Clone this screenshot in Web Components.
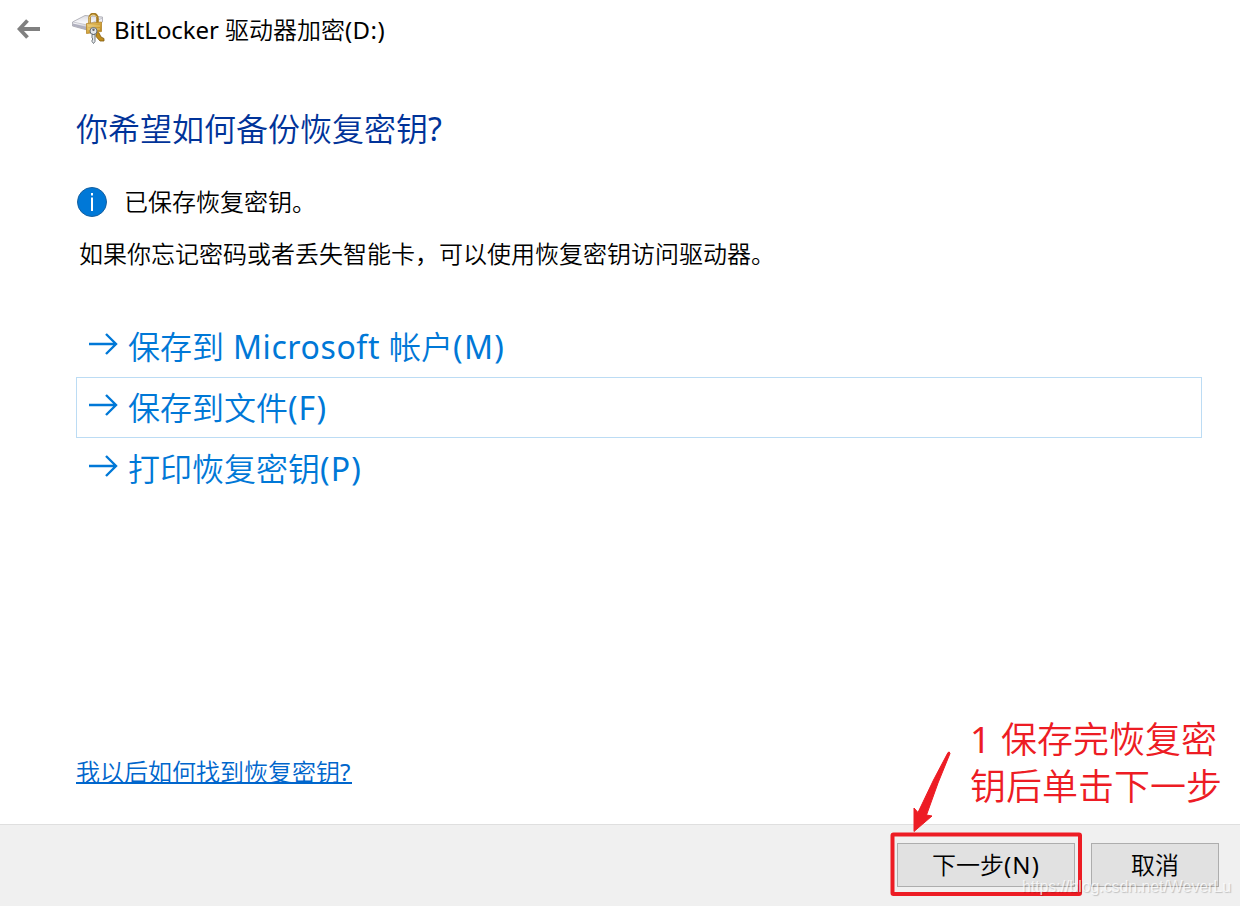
<!DOCTYPE html>
<html lang="zh-CN">
<head>
<meta charset="utf-8">
<title>BitLocker 驱动器加密(D:)</title>
<style>
    body{
        margin: 0;
        background-color: #fff;
        font-family: "Noto Sans", "Noto Sans CJK SC", sans-serif;
        font-weight: 350;
    }
</style>
</head>
<body>
<bl-wizard>
    <wizard-title slot="title"><div><fit-text data-width="105">BitLocker</fit-text><fit-text data-width="6"> </fit-text>驱动器加密<fit-text data-width="40">(D:)</fit-text></div></wizard-title>
    <wizard-heading slot="content">你希望如何备份恢复密钥<fit-text data-width="14">?</fit-text></wizard-heading>
    <info-note slot="content">已保存恢复密钥。</info-note>
    <wizard-text slot="content">如果你忘记密码或者丢失智能卡，可以使用恢复密钥访问驱动器。</wizard-text>
    <command-list slot="content">
        <command-link>保存到<fit-text data-width="165"> Microsoft </fit-text>帐户<fit-text data-width="52">(M)</fit-text></command-link>
        <command-link class="focused">保存到文件<fit-text data-width="39">(F)</fit-text></command-link>
        <command-link>打印恢复密钥<fit-text data-width="42">(P)</fit-text></command-link>
    </command-list>
    <help-link slot="help">我以后如何找到恢复密钥<fit-text data-width="12">?</fit-text></help-link>
    <wizard-button slot="buttons" data-width="178">下一步<fit-text data-width="36">(N)</fit-text></wizard-button>
    <wizard-button slot="buttons" data-width="128">取消</wizard-button>
</bl-wizard>
<click-hint><div><fit-text data-width="31">1 </fit-text>保存完恢复密</div><div>钥后单击下一步</div></click-hint>
<water-mark><fit-text data-width="209">https://blog.csdn.net/WeverLu</fit-text></water-mark>

<script>
function addTemplate(element, html){
    const template = document.createElement("template");
    template.innerHTML = html;
    element.attachShadow({mode: "open"});
    element.shadowRoot.appendChild(template.content.cloneNode(true));
}

// latin text run that spreads its letters over a given width
class FitText extends HTMLElement{
    constructor(){
        super();
        addTemplate(this, `<style>
    :host{
        display: inline-block;
        font-weight: 400;
        white-space: pre;
    }
</style><slot></slot>`);
    }
    connectedCallback(){
        const width = Number(this.getAttribute("data-width"));
        requestAnimationFrame(() => {
            const extra = width - this.getBoundingClientRect().width;
            this.style.letterSpacing = extra / this.textContent.length + "px";
        });
    }
}
customElements.define("fit-text", FitText);

class WizardTitle extends HTMLElement{
    constructor(){
        super();
        addTemplate(this, `
<style>
    :host{
        display: flex;
        align-items: center;
        height: 60px;
        font-size: 24px;
        line-height: 60px;
        color: #000;
    }
    .back{
        width: 24px;
        height: 20px;
        margin: 0 0 2px 17px;
    }
    .drive{
        width: 34px;
        height: 34px;
        margin: 0 8px 0 31px;
    }
</style>
<svg class="back" viewBox="0 0 24 20"><path d="M23 10H3M10.500 1.500 2.500 10l8 8.500" fill="none" stroke="#808080" stroke-width="3.800"/></svg>
<svg class="drive" viewBox="0 0 34 34">
    <defs>
        <linearGradient id="metal" x1="0" y1="0" x2="0" y2="1"><stop offset="0" stop-color="#dcdce2"/><stop offset=".5" stop-color="#fafafd"/><stop offset="1" stop-color="#9c9ca8"/></linearGradient>
        <linearGradient id="gold" x1="0" y1="0" x2="1" y2="1"><stop offset="0" stop-color="#f0d486"/><stop offset=".5" stop-color="#d4a73f"/><stop offset="1" stop-color="#b37f18"/></linearGradient>
    </defs>
    <path d="M.5 9 13 2.500 30.500 4v5L17 17.500.5 13z" fill="url(#metal)" stroke="#a5a5ad" stroke-width=".8"/>
    <path d="M1 9 15 12 30.500 5" fill="none" stroke="#bcbcc4" stroke-width=".8"/>
    <path d="M1 10.500 15 14v2.500L1 12.700z" fill="#b0b0bf"/>
    <path d="M17.500 11V5.500a4 4.500 0 0 1 8 0V11" fill="none" stroke="#a67a20" stroke-width="2.600"/>
    <path d="M17.200 11V5.700a4 4.300 0 0 1 7.500-1.500" fill="none" stroke="#eed58e" stroke-width="1"/>
    <path d="M24 18 27 20l2 4 3 1.500v2.500h-4L24 23.500z" fill="#bf8c1d" stroke="#815b10" stroke-width=".8"/>
    <path d="M14.500 10.500 29.500 9v9.500l-15 2z" fill="url(#gold)" stroke="#b48429" stroke-width=".8"/>
    <path d="M16 13h12M16 16h12" stroke="#f2dc9c" stroke-width=".7"/>
    <circle cx="21.500" cy="18" r="3.500" fill="#e3e6e9" stroke="#666e77"/>
    <circle cx="21.500" cy="16.800" r="1.200" fill="#65666b"/>
    <path d="M20 21.500h3v7l-1.500 2-1.500-2v-1.500l1-1-1-1z" fill="#e4e7ea" stroke="#646b72" stroke-width=".9"/>
</svg>
<slot></slot>`);
    }
}
customElements.define("wizard-title", WizardTitle);

class WizardHeading extends HTMLElement{
    constructor(){
        super();
        addTemplate(this, `
<style>
    :host{
        display: block;
        margin-top: 45px;
        height: 48px;
        font-size: 32px;
        line-height: 48px;
        color: #003399;
    }
</style>
<slot></slot>`);
    }
}
customElements.define("wizard-heading", WizardHeading);

class InfoNote extends HTMLElement{
    constructor(){
        super();
        addTemplate(this, `
<style>
    :host{
        display: flex;
        align-items: center;
        gap: 17px;
        margin: 29px 0 0 1px;
        height: 40px;
        font-size: 24px;
        line-height: 40px;
        color: #000;
    }
</style>
<svg width="30" height="30" viewBox="0 0 30 30">
    <circle cx="15" cy="15" r="14.500" fill="#0078d7" stroke="#17609f"/>
    <path d="M14 6h2v2.500h-2zM14 10.500h2V24h-2z" fill="#fff"/>
</svg>
<slot></slot>`);
    }
}
customElements.define("info-note", InfoNote);

class WizardText extends HTMLElement{
    constructor(){
        super();
        addTemplate(this, `
<style>
    :host{
        display: block;
        margin: 12px 0 0 3px;
        height: 40px;
        font-size: 24px;
        line-height: 40px;
        color: #000;
    }
</style>
<slot></slot>`);
    }
}
customElements.define("wizard-text", WizardText);

class CommandList extends HTMLElement{
    constructor(){
        super();
        addTemplate(this, `
<style>
    :host{
        display: flex;
        flex-direction: column;
        margin-top: 42px;
    }
</style>
<slot></slot>`);
    }
}
customElements.define("command-list", CommandList);

class CommandLink extends HTMLElement{
    constructor(){
        super();
        addTemplate(this, `
<style>
    :host{
        display: flex;
        box-sizing: border-box;
        width: 1126px;
        height: 61px;
        padding-left: 12px;
        border: 1px solid transparent;
        font-size: 32px;
        line-height: 59px;
        color: #0078d7;
    }
    :host(.focused){
        border-color: #bcdcf4;
    }
    svg{
        margin: 16px 10px 0 0;
    }
</style>
<svg width="29" height="22" viewBox="0 0 29 22"><path d="M0 11h27M17 1l10 10-10 10" fill="none" stroke="#0078d7" stroke-width="2.400"/></svg>
<div><slot></slot></div>`);
    }
}
customElements.define("command-link", CommandLink);

class HelpLink extends HTMLElement{
    constructor(){
        super();
        addTemplate(this, `
<style>
    :host{
        display: inline-block;
        height: 34px;
        font-size: 24px;
        line-height: 32px;
        color: #0066cc;
    }
    a{
        display: block;
        height: 26px;
        border-bottom: 2px solid #0066cc;
        cursor: pointer;
    }
</style>
<a><slot></slot></a>`);
    }
}
customElements.define("help-link", HelpLink);

class WizardButton extends HTMLElement{
    constructor(){
        super();
        addTemplate(this, `
<style>
    :host{
        display: block;
    }
    button{
        display: block;
        box-sizing: border-box;
        width: 100%;
        height: 44px;
        padding: 0;
        border: 1px solid #adadad;
        background-color: #e1e1e1;
        font: inherit;
        font-size: 24px;
        line-height: 42px;
        color: #000;
    }
</style>
<button><slot></slot></button>`);
    }
    connectedCallback(){
        this.style.width = this.getAttribute("data-width") + "px";
    }
}
customElements.define("wizard-button", WizardButton);

class BlWizard extends HTMLElement{
    constructor(){
        super();
        addTemplate(this, `
<style>
    :host{
        display: flex;
        flex-direction: column;
        height: 906px;
        overflow: hidden;
    }
    main{
        flex: 1;
        padding-left: 76px;
    }
    .help{
        padding-left: 76px;
        height: 68px;
    }
    footer{
        display: flex;
        justify-content: flex-end;
        gap: 16px;
        box-sizing: border-box;
        height: 82px;
        padding: 18px 21px 0 0;
        border-top: 1px solid #dfdfdf;
        background-color: #f0f0f0;
    }
</style>
<slot name="title"></slot>
<main><slot name="content"></slot></main>
<div class="help"><slot name="help"></slot></div>
<footer><slot name="buttons"></slot></footer>`);
    }
}
customElements.define("bl-wizard", BlWizard);

// red note, arrow and frame drawn over the dialog
class ClickHint extends HTMLElement{
    constructor(){
        super();
        addTemplate(this, `
<style>
    :host{
        position: absolute;
        left: 890px;
        top: 716px;
        width: 350px;
        height: 190px;
        font-size: 36px;
        line-height: 47px;
        color: #ed1c24;
        pointer-events: none;
    }
    svg{
        position: absolute;
        left: 0;
        top: 0;
    }
    .note{
        margin-left: 80px;
        white-space: nowrap;
    }
</style>
<svg width="350" height="190" viewBox="0 0 350 190">
    <path d="M58 36.500Q59.500 35 60 37.500L48 67 36.500 99l5.500 1L24 115.500V92L28 96.500 43.500 64z" fill="#ed1c24" stroke="#ed1c24"/>
    <rect x="2.500" y="118.500" width="187.500" height="59.500" rx="1" fill="none" stroke="#ed1c24" stroke-width="4"/>
</svg>
<div class="note"><slot></slot></div>`);
    }
}
customElements.define("click-hint", ClickHint);

class WaterMark extends HTMLElement{
    constructor(){
        super();
        addTemplate(this, `
<style>
    :host{
        position: absolute;
        left: 1022px;
        top: 876px;
        font-family: "Liberation Sans", sans-serif;
        font-size: 16px;
        line-height: 22px;
        color: rgba(255, 255, 255, .75);
        text-shadow: 1px 1px 1px rgba(0, 0, 0, .2);
        pointer-events: none;
    }
</style>
<slot></slot>`);
    }
}
customElements.define("water-mark", WaterMark);
</script>
</body>
</html>
